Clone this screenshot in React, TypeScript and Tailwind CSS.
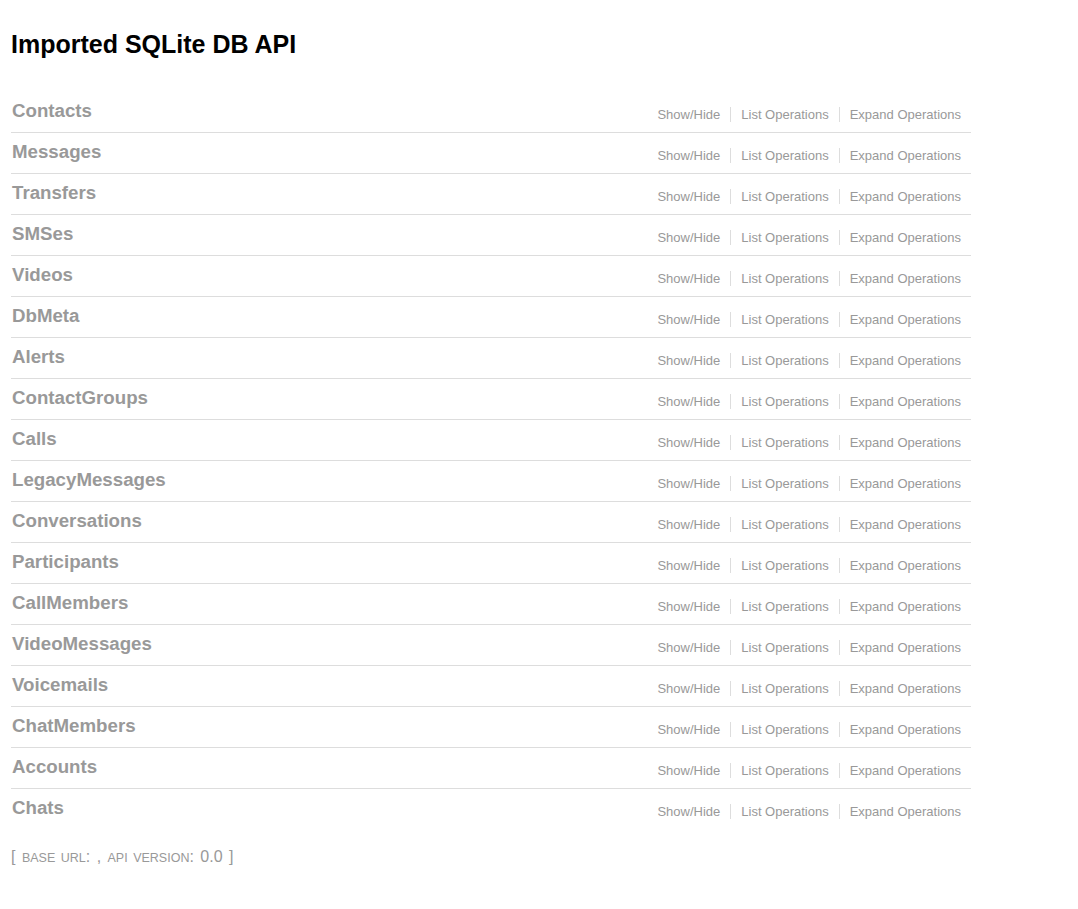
import React from "react";

const resources = [
  "Contacts",
  "Messages",
  "Transfers",
  "SMSes",
  "Videos",
  "DbMeta",
  "Alerts",
  "ContactGroups",
  "Calls",
  "LegacyMessages",
  "Conversations",
  "Participants",
  "CallMembers",
  "VideoMessages",
  "Voicemails",
  "ChatMembers",
  "Accounts",
  "Chats",
];

function Resource({ name }: { name: string }) {
  return (
    <li className="flex h-[41px] items-start justify-between border-b border-[#ddd] last:border-b-0">
      <h2 className="pl-px pt-[9px] text-[18.7px] font-bold leading-[20px] text-[#999]">
        <a href="#">{name}</a>
      </h2>
      <ul className="flex pt-[15px] text-[13px] leading-[15px] text-[#999]">
        <li className="border-r border-[#ddd] px-[10px]">
          <a href="#">Show/Hide</a>
        </li>
        <li className="border-r border-[#ddd] px-[10px]">
          <a href="#">List Operations</a>
        </li>
        <li className="px-[10px]">
          <a href="#">Expand Operations</a>
        </li>
      </ul>
    </li>
  );
}

export default function App() {
  return (
    <div
      className="min-h-[909px] bg-white px-[11px]"
      style={{ fontFamily: '"Liberation Sans", Arial, sans-serif' }}
    >
      <div className="w-[960px]">
        <h1 className="pt-[30px] text-[25px] font-bold leading-[28px] text-black">
          Imported SQLite DB API
        </h1>
        <ul className="mt-[34px]">
          {resources.map((r) => (
            <Resource key={r} name={r} />
          ))}
        </ul>
        <h4 className="pt-[17px] text-[16px] leading-[20px] tracking-normal text-[#999] [word-spacing:2px]">
          [ <span className="text-[12.5px] uppercase">base url</span>: ,{" "}
          <span className="text-[12.5px] uppercase">api version</span>: 0.0 ]
        </h4>
      </div>
    </div>
  );
}
